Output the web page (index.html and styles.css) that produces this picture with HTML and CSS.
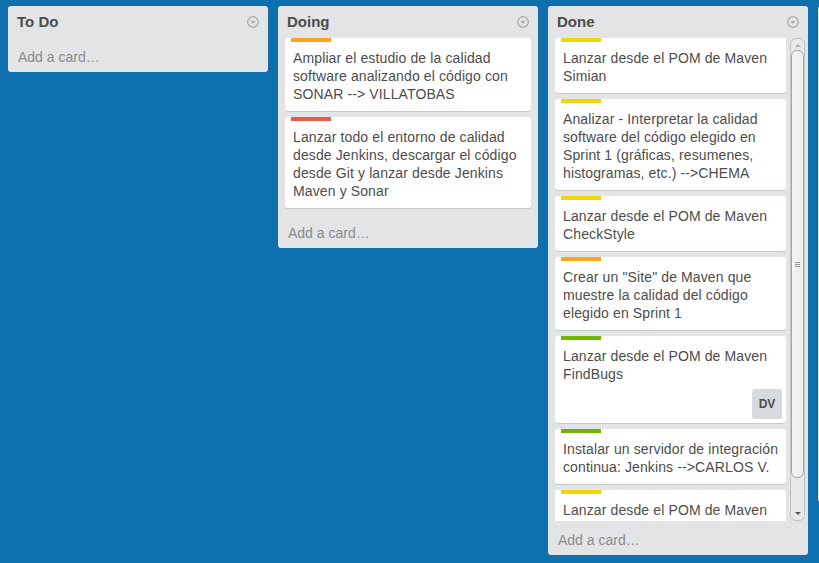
FILE: index.html
```html
<!DOCTYPE html>
<html lang="es">
<head>
<meta charset="utf-8">
<title>Board</title>
<link rel="stylesheet" href="styles.css">
</head>
<body>
<div class="board">
  <section class="list">
    <header class="list-header">
      <h2 class="list-title">To Do</h2>
      <svg class="list-menu" width="12" height="12" viewBox="0 0 12 12"><circle cx="6" cy="6" r="5.3" fill="none" stroke="#a5a9ac" stroke-width="1.2"/><path d="M3.6 5 H8.4 L6 7.8 Z" fill="#a5a9ac"/></svg>
    </header>
    <div class="cards"></div>
    <div class="add-card">Add a card…</div>
  </section>

  <section class="list">
    <header class="list-header">
      <h2 class="list-title">Doing</h2>
      <svg class="list-menu" width="12" height="12" viewBox="0 0 12 12"><circle cx="6" cy="6" r="5.3" fill="none" stroke="#a5a9ac" stroke-width="1.2"/><path d="M3.6 5 H8.4 L6 7.8 Z" fill="#a5a9ac"/></svg>
    </header>
    <div class="cards">
      <div class="card"><span class="label orange"></span><p class="card-text">Ampliar el estudio de la calidad software analizando el código con SONAR --&gt; VILLATOBAS</p></div>
      <div class="card"><span class="label red"></span><p class="card-text">Lanzar todo el entorno de calidad desde Jenkins, descargar el código desde Git y lanzar desde Jenkins Maven y Sonar</p></div>
    </div>
    <div class="add-card">Add a card…</div>
  </section>

  <section class="list">
    <header class="list-header">
      <h2 class="list-title">Done</h2>
      <svg class="list-menu" width="12" height="12" viewBox="0 0 12 12"><circle cx="6" cy="6" r="5.3" fill="none" stroke="#a5a9ac" stroke-width="1.2"/><path d="M3.6 5 H8.4 L6 7.8 Z" fill="#a5a9ac"/></svg>
    </header>
    <div class="cards scrolling">
      <div class="card-column">
        <div class="card"><span class="label yellow"></span><p class="card-text">Lanzar desde el POM de Maven Simian</p></div>
        <div class="card"><span class="label yellow"></span><p class="card-text">Analizar - Interpretar la calidad software del código elegido en Sprint 1 (gráficas, resumenes, histogramas, etc.) --&gt;CHEMA</p></div>
        <div class="card"><span class="label yellow"></span><p class="card-text">Lanzar desde el POM de Maven CheckStyle</p></div>
        <div class="card"><span class="label orange"></span><p class="card-text">Crear un "Site" de Maven que muestre la calidad del código elegido en Sprint 1</p></div>
        <div class="card"><span class="label green"></span><p class="card-text">Lanzar desde el POM de Maven FindBugs</p><div class="members"><span class="member">DV</span></div></div>
        <div class="card"><span class="label green"></span><p class="card-text">Instalar un servidor de integración continua: Jenkins --&gt;CARLOS V.</p></div>
        <div class="card"><span class="label yellow"></span><p class="card-text">Lanzar desde el POM de Maven</p></div>
      </div>
      <div class="scrollbar">
        <span class="arrow up"></span>
        <div class="thumb"><span class="grip"></span></div>
        <span class="arrow down"></span>
      </div>
    </div>
    <div class="add-card">Add a card…</div>
  </section>

  <section class="list list-partial"></section>
</div>
</body>
</html>
```

FILE: styles.css
```css
html, body {
  margin: 0;
  padding: 0;
  height: 100%;
}

body {
  background: #0e6fad;
  overflow: hidden;
  font-family: "Liberation Sans", Arial, sans-serif;
  font-size: 14px;
  line-height: 18px;
  color: #4d4d4d;
}

.board {
  display: flex;
  align-items: flex-start;
  gap: 10px;
  padding: 6px 8px;
}

.list {
  flex: 0 0 260px;
  width: 260px;
  background: #e2e4e6;
  border-radius: 3px;
  display: flex;
  flex-direction: column;
}

.list-partial {
  height: 496px;
}

.list-header {
  display: flex;
  align-items: center;
  justify-content: space-between;
  padding: 7px 9px 7px 9px;
}

.list-title {
  margin: 0;
  font-size: 15px;
  line-height: 18px;
  font-weight: bold;
  color: #4d4d4d;
}

.list-menu {
  display: block;
}

.cards {
  padding: 0 7px;
}

.cards.scrolling {
  display: flex;
  gap: 4px;
  height: 483px;
  overflow: hidden;
  padding: 0 3px 0 7px;
}

.card-column {
  flex: 1;
  min-width: 0;
}

.card {
  background: #fff;
  border-radius: 3px;
  box-shadow: 0 1px 0 #c7cacc;
  margin-bottom: 6px;
  padding: 0 4px 2px 6px;
  display: flex;
  flex-direction: column;
}

.label {
  display: block;
  width: 40px;
  height: 4px;
  margin-bottom: 7px;
}

.orange { background: #faa420; }
.red { background: #eb5a46; }
.yellow { background: #f2d600; }
.green { background: #70b500; }

.card-text {
  margin: 0 0 6px;
  padding: 0 3px 0 2px;
  letter-spacing: 0.12px;
}

.members {
  display: flex;
  justify-content: flex-end;
  margin-bottom: 2px;
}

.member {
  width: 30px;
  height: 30px;
  border-radius: 3px;
  background: #d6dadc;
  color: #4d4d4d;
  font-weight: bold;
  font-size: 12px;
  line-height: 30px;
  text-align: center;
}

.add-card {
  padding: 10px 10px 6px;
  color: #8c8c8c;
}

.scrollbar {
  flex: 0 0 13px;
  box-sizing: border-box;
  height: 483px;
  border: 1px solid #c2c2c2;
  border-radius: 6px;
  background: #e9e9e9;
  display: flex;
  flex-direction: column;
  align-items: center;
  padding: 3px 0;
}

.arrow {
  display: block;
  width: 0;
  height: 0;
  border-left: 3px solid transparent;
  border-right: 3px solid transparent;
  flex: 0 0 auto;
}

.arrow.up {
  border-bottom: 3px solid #a9a9a9;
  margin: 2px 0 3px;
}

.arrow.down {
  border-top: 3px solid #555;
  margin: auto 0 2px;
}

.thumb {
  box-sizing: border-box;
  width: 13px;
  height: 428px;
  border: 1px solid #a8a8a8;
  border-radius: 6px;
  background: linear-gradient(to right, #f6f5f4, #ecebea);
  display: flex;
  align-items: center;
  justify-content: center;
}

.grip {
  display: block;
  width: 5px;
  height: 5px;
  background: repeating-linear-gradient(to bottom, #9a9a9a 0 1px, transparent 1px 2px);
}
```
